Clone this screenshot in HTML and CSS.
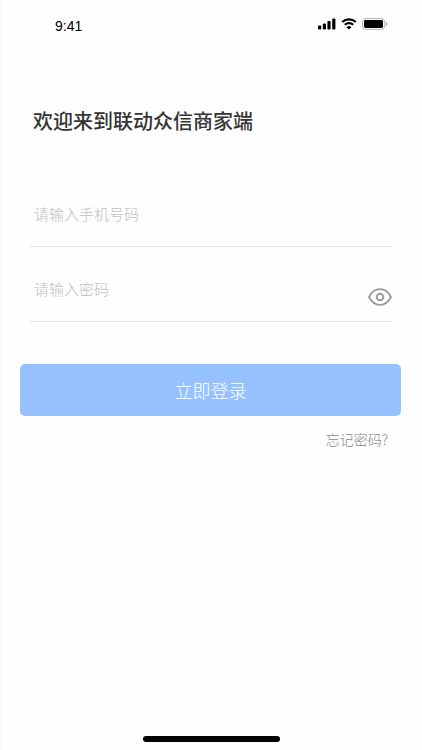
FILE: index.html
```html
<!DOCTYPE html>
<html lang="zh-CN">
<head>
<meta charset="utf-8">
<meta name="viewport" content="width=device-width, initial-scale=1">
<title>商家端登录</title>
<link rel="stylesheet" href="styles.css">
</head>
<body>
<div class="screen">
  <header class="status">
    <span class="time">9:41</span>
    <span class="indicators">
      <svg class="signal" width="18" height="12" viewBox="0 0 18 12" aria-hidden="true">
        <rect x="0" y="7.5" width="3.2" height="4" rx="1"/>
        <rect x="4.8" y="5.5" width="3.2" height="6" rx="1"/>
        <rect x="9.4" y="3" width="3.2" height="8.5" rx="1"/>
        <rect x="14.2" y="0.5" width="3.2" height="11" rx="1"/>
      </svg>
      <svg class="wifi" width="16" height="12" viewBox="0 0 16 12" aria-hidden="true">
        <path d="M1.2 4.1a9.8 9.8 0 0 1 13.6 0M3.8 6.8a6.1 6.1 0 0 1 8.4 0" fill="none" stroke="#000" stroke-width="2.1"/>
        <path d="M8 11.6 5.6 9.2a3.5 3.5 0 0 1 4.8 0z"/>
      </svg>
      <svg class="battery" width="26" height="12" viewBox="0 0 26 12" aria-hidden="true">
        <rect x="0.6" y="0.6" width="22" height="10.8" rx="3" fill="none" stroke="#b4b4b4"/>
        <rect x="2" y="2" width="19" height="8" rx="1.4"/>
        <path d="M23.8 4v4c.9-.3 1.4-1.1 1.4-2s-.5-1.700-1.400-2z" fill="#a9a9a9"/>
      </svg>
    </span>
  </header>
  <main class="login">
    <h1 class="title">欢迎来到联动众信商家端</h1>
    <form class="form">
      <div class="field">
        <input class="input" type="tel" placeholder="请输入手机号码" aria-label="手机号码">
      </div>
      <div class="field">
        <input class="input" type="password" placeholder="请输入密码" aria-label="密码">
        <button class="reveal" type="button" aria-label="显示密码">
          <svg width="24" height="18" viewBox="0 0 24 18" aria-hidden="true">
            <path d="M1 9C3.600 4 7.500 1.200 12 1.200S20.400 4 23 9c-2.600 5-6.500 7.800-11 7.800S3.600 14 1 9z" fill="none" stroke="#999" stroke-width="1.700" stroke-linejoin="round"/>
            <circle cx="12" cy="9" r="3.300" fill="none" stroke="#999" stroke-width="1.900"/>
          </svg>
        </button>
      </div>
      <button class="submit" type="submit">立即登录</button>
      <a class="forgot" href="#">忘记密码?</a>
    </form>
  </main>
  <footer class="home"><span class="home-bar"></span></footer>
</div>
</body>
</html>
```
FILE: styles.css
```css
* {
  box-sizing: border-box;
}

body {
  margin: 0;
  background: #fefefe;
  color: #333;
  font-family: "Noto Sans CJK SC", sans-serif;
}

.screen {
  display: flex;
  flex-direction: column;
  min-height: 100vh;
  border-left: 1px solid #f8f8f8;
}

.status {
  display: flex;
  align-items: center;
  justify-content: space-between;
  height: 48px;
  padding: 0 34px 0 54px;
}

.time {
  padding-top: 4px;
  color: #000;
  font-family: "Liberation Sans", sans-serif;
  font-size: 14px;
  line-height: 20px;
}

.indicators {
  display: flex;
  align-items: center;
  gap: 5px;
}

.login {
  flex: 1;
  padding: 56px 21px 0 19px;
}

.title {
  margin: 0 13px;
  font-size: 20px;
  font-weight: 500;
  line-height: 34px;
}

.form {
  display: flex;
  flex-direction: column;
  padding-top: 34px;
}

.field {
  display: flex;
  align-items: center;
  height: 75px;
  margin: 0 9px 0 10px;
  border-bottom: 1px solid #e4e4e4;
}

.input {
  flex: 1;
  min-width: 0;
  height: 56px;
  margin-top: 8px;
  padding: 0 4px;
  border: 0;
  outline: 0;
  background: none;
  color: #333;
  font-family: inherit;
  font-size: 15px;
}

.input::placeholder {
  color: #c0c0c0;
  font-weight: 300;
  opacity: 1;
}

.reveal {
  display: flex;
  margin-top: 26px;
  padding: 0;
  border: 0;
  background: none;
}

.submit {
  height: 52px;
  margin-top: 42px;
  border: 0;
  border-radius: 5px;
  background: #96c1ff;
  color: #fff;
  font-family: inherit;
  font-size: 18px;
  font-weight: 300;
}

.forgot {
  align-self: flex-end;
  margin: 13px 13px 0;
  color: #888;
  font-size: 14px;
  font-weight: 300;
  line-height: 20px;
  text-decoration: none;
}

.home {
  display: flex;
  justify-content: center;
  padding-bottom: 8px;
}

.home-bar {
  width: 137px;
  height: 6px;
  border-radius: 3px;
  background: #000;
}
```
